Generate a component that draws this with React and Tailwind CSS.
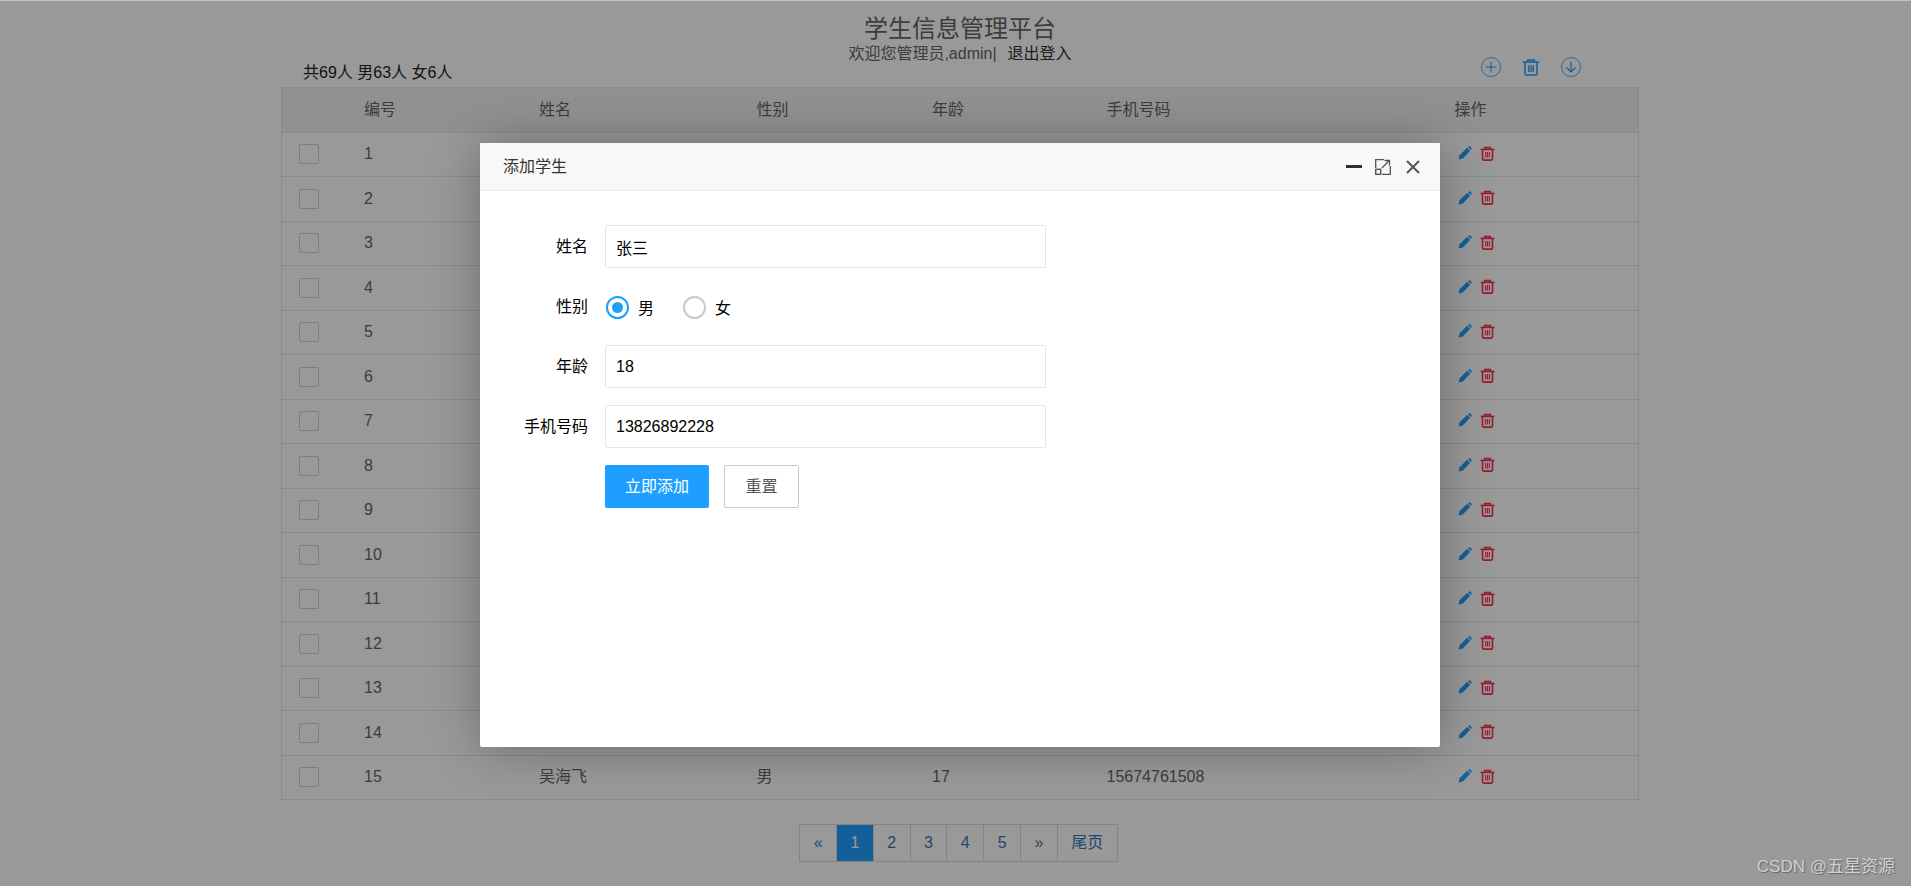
import React from "react";

const COLS = "grid-cols-[82px_175px_217.5px_175.5px_174.5px_348px_1fr]";

function TrashLine({ className, strong }) {
  return (
    <svg viewBox="0 0 24 24" className={className} fill="none" stroke="currentColor" strokeWidth={strong ? 2.6 : 2}>
      <path d="M1 5.5h22" />
      <path d="M7.5 5V2.5h9V5" />
      <path d="M4 6v14.5a2 2 0 0 0 2 2h12a2 2 0 0 0 2-2V6" />
      <path d="M9 9.5v9M12 9.5v9M15 9.5v9" strokeWidth="1.8" />
    </svg>
  );
}

function Pencil() {
  return (
    <svg viewBox="0 0 14 14" className="h-[14px] w-[14px] text-[#1e9fff]" fill="currentColor">
      <path d="M0.6 13.4 L1.6 9.2 L9.2 1.8 L12.2 4.8 L4.8 12.4Z" />
      <path d="M10 1 L11 0.4 Q11.8 0 12.5 0.7 L13.3 1.5 Q14 2.2 13.5 3 L13 3.9Z" />
    </svg>
  );
}

function Row({ n, name, sex, age, phone }) {
  return (
    <div className={`grid ${COLS} h-[44.5px] items-center border-b border-[#e6e6e6] last:h-[43.5px] last:border-b-0`}>
      <div className="pl-[17px]">
        <div className="h-[20px] w-[20px] rounded-[2px] border border-[#d2d2d2] bg-white" />
      </div>
      <div>{n}</div>
      <div>{name}</div>
      <div>{sex}</div>
      <div>{age}</div>
      <div>{phone}</div>
      <div className="flex items-center gap-[8px] pl-[3px] pb-[2px]">
        <Pencil />
        <TrashLine strong className="h-[15px] w-[15px] text-[#ff2d4d]" />
      </div>
    </div>
  );
}

function Field({ label, value }) {
  return (
    <div className="flex items-center">
      <label className="w-[108px] shrink-0 text-right text-black">{label}</label>
      <input
        readOnly
        value={value}
        className="ml-[17px] h-[43px] w-[441px] rounded-[2px] border border-[#e6e6e6] bg-white pl-[10px] text-black outline-none"
      />
    </div>
  );
}

function Radio({ checked, label }) {
  return (
    <div className="flex items-center">
      <span
        className={`flex h-[23px] w-[23px] items-center justify-center rounded-full border-2 ${
          checked ? "border-[#1e9fff]" : "border-[#c9c9c9]"
        }`}
      >
        {checked && <span className="h-[11px] w-[11px] rounded-full bg-[#1e9fff]" />}
      </span>
      <span className="ml-[9px] mt-[2px] text-black">{label}</span>
    </div>
  );
}

export default function App() {
  const pages = ["«", "1", "2", "3", "4", "5", "»"];
  const rows = Array.from({ length: 14 }, (_, i) => i + 1);
  return (
    <div
      className="relative h-[886px] overflow-hidden bg-white text-base text-[#666]"
      style={{ fontFamily: '"Liberation Sans", "Noto Sans CJK SC", sans-serif' }}
    >
      <div className="ml-[281px] w-[1358px]">
        <div className="pt-[14px] text-center">
          <h1 className="text-2xl leading-[30px] text-[#666]">学生信息管理平台</h1>
          <p className="leading-[20px]">
            欢迎您管理员,admin|
            <a className="ml-[11px] text-[#333]">退出登入</a>
          </p>
        </div>
        <div className="-mt-[7px] flex h-[30px] items-start justify-between pl-[22px] pr-[58px]">
          <span className="mt-[6px] leading-[20px] text-[#222]">共69人 男63人 女6人</span>
          <div className="flex items-center gap-[21px] text-[#1e9fff]">
            <svg viewBox="0 0 20 20" className="h-[20px] w-[20px]" fill="none" stroke="currentColor" strokeWidth="0.8">
              <circle cx="10" cy="10" r="9.5" />
              <path d="M10 4.5v11M4.5 10h11" strokeWidth="1" />
            </svg>
            <TrashLine className="h-[18px] w-[18px]" />
            <svg viewBox="0 0 20 20" className="h-[20px] w-[20px]" fill="none" stroke="currentColor" strokeWidth="0.8">
              <circle cx="10" cy="10" r="9.5" />
              <path d="M10 4.5v10.5M5.5 10.5 10 15l4.5-4.5" strokeWidth="1.2" />
            </svg>
          </div>
        </div>

        <div className="border border-[#e6e6e6]">
          <div className={`grid ${COLS} h-[44.5px] items-center border-b border-[#e6e6e6] bg-[#f2f2f2]`}>
            <div />
            <div>编号</div>
            <div>姓名</div>
            <div>性别</div>
            <div>年龄</div>
            <div>手机号码</div>
            <div>操作</div>
          </div>
          {rows.map((n) => (
            <Row key={n} n={n} />
          ))}
          <Row n={15} name="吴海飞" sex="男" age="17" phone="15674761508" />
        </div>

        <div className="mt-[24px] flex justify-center pr-[3px]">
          <div className="flex h-[38px] border border-[#ddd] text-[#337ab7]">
            {pages.map((p) => (
              <div
                key={p}
                className={`flex w-[36.8px] items-center justify-center border-r border-[#ddd] ${
                  p === "1" ? "bg-[#1e9fff] text-white" : ""
                }`}
              >
                {p}
              </div>
            ))}
            <div className="flex w-[59px] items-center justify-center">尾页</div>
          </div>
        </div>
      </div>

      {/* modal shade */}
      <div className="absolute inset-0 border-t border-[#c0c0c0] bg-black/40" />

      {/* dialog */}
      <div className="absolute left-[480px] top-[143px] flex h-[604px] w-[960px] flex-col rounded-[2px] bg-white shadow-[1px_1px_50px_rgba(0,0,0,0.3)]">
        <div className="flex h-[48px] shrink-0 items-center justify-between border-b border-[#eee] bg-[#f8f8f8] pl-[23px] pr-[20px] text-[#333]">
          <span>添加学生</span>
          <div className="flex items-center text-[#2e2d3c]">
            <span className="h-[3px] w-[16px] bg-[#2e2d3c]" />
            <svg viewBox="0 0 16 16" className="ml-[13px] h-[16px] w-[16px] text-[#555]" fill="none" stroke="currentColor" strokeWidth="1.3">
              <path d="M9 .7H.7V9M15.3 7v8.3H7" />
              <rect x=".7" y="10.3" width="5" height="5" strokeWidth="1.4" />
              <path d="M7 9l7-7.3M9.5 1.5H14.5V6.5" strokeWidth="1.3" />
            </svg>
            <svg viewBox="0 0 14 14" className="ml-[15px] h-[14px] w-[14px] text-[#555]" fill="none" stroke="currentColor" strokeWidth="2">
              <path d="M1 1l12 12M13 1L1 13" />
            </svg>
          </div>
        </div>
        <form className="flex flex-col gap-[17px] pt-[34px]">
          <Field label="姓名" value="张三" />
          <div className="flex h-[43px] items-center">
            <label className="w-[108px] shrink-0 text-right text-black">性别</label>
            <div className="ml-[17px] flex items-center gap-[29px] pl-px pt-[2px]">
              <Radio checked label="男" />
              <Radio label="女" />
            </div>
          </div>
          <Field label="年龄" value="18" />
          <Field label="手机号码" value="13826892228" />
          <div className="flex gap-[15px] pl-[125px]">
            <button type="button" className="h-[43px] w-[104px] rounded-[2px] bg-[#1e9fff] text-white">
              立即添加
            </button>
            <button type="button" className="h-[43px] w-[75px] rounded-[2px] border border-[#c9c9c9] bg-white text-[#555]">
              重置
            </button>
          </div>
        </form>
      </div>

      {/* watermark */}
      <span className="absolute right-[16px] bottom-[8px] text-[17px] leading-[22px] text-[#d0d0d0] [text-shadow:1px_1px_1px_rgba(0,0,0,0.35)]">
        CSDN @五星资源
      </span>
    </div>
  );
}
